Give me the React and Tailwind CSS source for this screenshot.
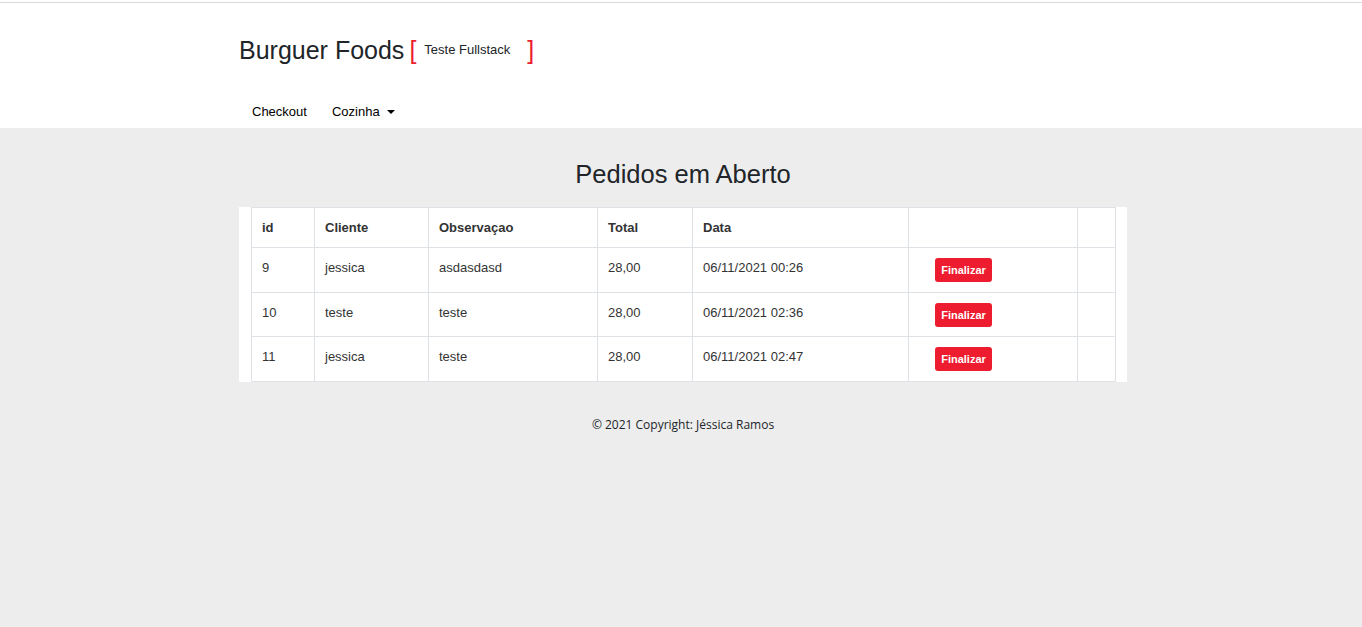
export default function App() {
  const rows = [
    { id: "9", cliente: "jessica", obs: "asdasdasd", total: "28,00", data: "06/11/2021 00:26" },
    { id: "10", cliente: "teste", obs: "teste", total: "28,00", data: "06/11/2021 02:36" },
    { id: "11", cliente: "jessica", obs: "teste", total: "28,00", data: "06/11/2021 02:47" },
  ];
  const cols = ["w-[63px]", "w-[114px]", "w-[169px]", "w-[95px]", "w-[216px]", "w-[169px]", "w-[38px]"];
  return (
    <div className="min-h-[627px] flex flex-col bg-[#ededed] text-[#212529]" style={{ fontFamily: '"Liberation Sans", Arial, sans-serif' }}>
      <div className="bg-white">
        <div className="h-[2px] bg-white" />
        <div className="h-px bg-[#d9d9d9]" />
        <div className="pl-[4px]">
          <div className="mx-auto w-[888px] h-[125px] flex flex-col">
            <div className="flex items-center pt-[32px]">
              <span className="text-[25px] leading-[30px] text-[#212529]">Burguer Foods</span>
              <span className="text-[25px] leading-[30px] text-[#ed1c2e] ml-[5px]">[</span>
              <span className="text-[13px] leading-[16px] text-[#212529] ml-[8px]">Teste Fullstack</span>
              <span className="text-[25px] leading-[30px] text-[#ed1c2e] ml-[17px]">]</span>
            </div>
            <div className="flex items-center mt-[37px] text-[13px] text-black">
              <span className="ml-[13px]">Checkout</span>
              <span className="ml-[25px] flex items-center">
                Cozinha
                <span className="ml-[7px] inline-block w-0 h-0 border-l-[4px] border-r-[4px] border-t-[4px] border-l-transparent border-r-transparent border-t-black" />
              </span>
            </div>
          </div>
        </div>
      </div>
      <div className="pl-[4px]">
        <div className="mx-auto w-[888px]">
          <h1 className="text-center text-[25.5px] leading-[30px] mt-[31px] mb-[18px] text-[#212529]">Pedidos em Aberto</h1>
          <div className="bg-white px-[12px]">
            <table className="w-[864px] border-collapse text-[13px] text-[#333]" style={{ tableLayout: "fixed" }}>
              <colgroup>
                {cols.map((c, i) => (
                  <col key={i} className={c} />
                ))}
              </colgroup>
              <thead>
                <tr className="font-bold text-[#333]">
                  {["id", "Cliente", "Observaçao", "Total", "Data", "", ""].map((h, i) => (
                    <th key={i} className="border border-[#dee2e6] text-left px-[10px] pt-[10px] pb-[9px] leading-[20px] align-top">{h}</th>
                  ))}
                </tr>
              </thead>
              <tbody>
                {rows.map((r) => (
                  <tr key={r.id}>
                    {[r.id, r.cliente, r.obs, r.total, r.data].map((v, i) => (
                      <td key={i} className="border border-[#dee2e6] px-[10px] pt-[10px] pb-[9.6px] leading-[20px] align-top">{v}</td>
                    ))}
                    <td className="border border-[#dee2e6] px-[10px] pt-[10px] pb-[9.6px] leading-[20px] align-top">
                      <button className="ml-[16px] h-[24px] w-[57px] rounded-[3px] bg-[#ed1c2e] text-white text-[11px] font-bold leading-[24px] block">Finalizar</button>
                    </td>
                    <td className="border border-[#dee2e6]" />
                  </tr>
                ))}
              </tbody>
            </table>
          </div>
          <p className="text-center text-[12px] text-[#212529] mt-[34px]" style={{ fontFamily: '"Open Sans", sans-serif' }}>© 2021 Copyright: Jéssica Ramos</p>
        </div>
      </div>
    </div>
  );
}
